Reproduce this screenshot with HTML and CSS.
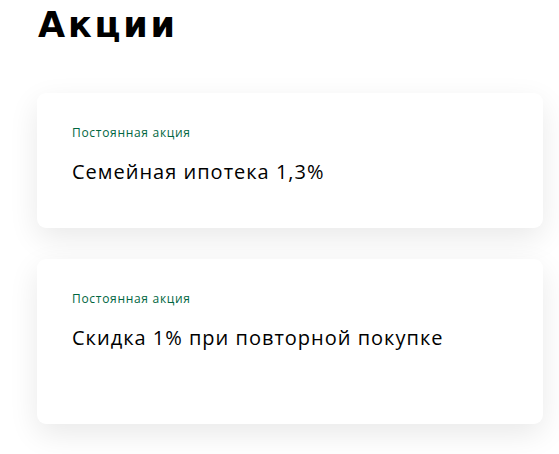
FILE: index.html
```html
<!DOCTYPE html>
<html lang="ru">
<head>
<meta charset="UTF-8">
<title>Акции</title>
<link rel="stylesheet" href="styles.css">
</head>
<body>

<h1 class="page-title">Акции</h1>

<div class="promo-list">
    <div class="promo-card">
        <div class="promo-label">Постоянная акция</div>
        <div class="promo-name">Семейная ипотека 1,3%</div>
    </div>
    <div class="promo-card promo-card--tall">
        <div class="promo-label">Постоянная акция</div>
        <div class="promo-name">Скидка 1% при повторной покупке</div>
    </div>
</div>

</body>
</html>
```

FILE: styles.css
```css
body {
    margin: 0;
    font-family: "Open Sans", "Noto Sans", sans-serif;
    color: #000;
    background: #fff;
}
.page-title {
    margin: 0;
    padding: 1px 0 0 38px;
    font-family: "DejaVu Sans", sans-serif;
    font-size: 35px;
    font-weight: 700;
    line-height: 48px;
    letter-spacing: 2.8px;
}
.promo-list {
    display: flex;
    flex-direction: column;
    gap: 31px;
    padding: 44px 16px 30px 37px;
}
.promo-card {
    background: #fff;
    border-radius: 9px;
    box-shadow: 0 10px 30px rgba(0, 0, 0, 0.09);
    padding: 32px 35px 0;
    height: 135px;
    box-sizing: border-box;
}
.promo-card--tall {
    height: 165px;
}
.promo-label {
    font-size: 12px;
    line-height: 16px;
    color: #00663f;
    letter-spacing: 0.7px;
}
.promo-name {
    margin-top: 18px;
    font-size: 20px;
    line-height: 26px;
    letter-spacing: 1px;
}
```
